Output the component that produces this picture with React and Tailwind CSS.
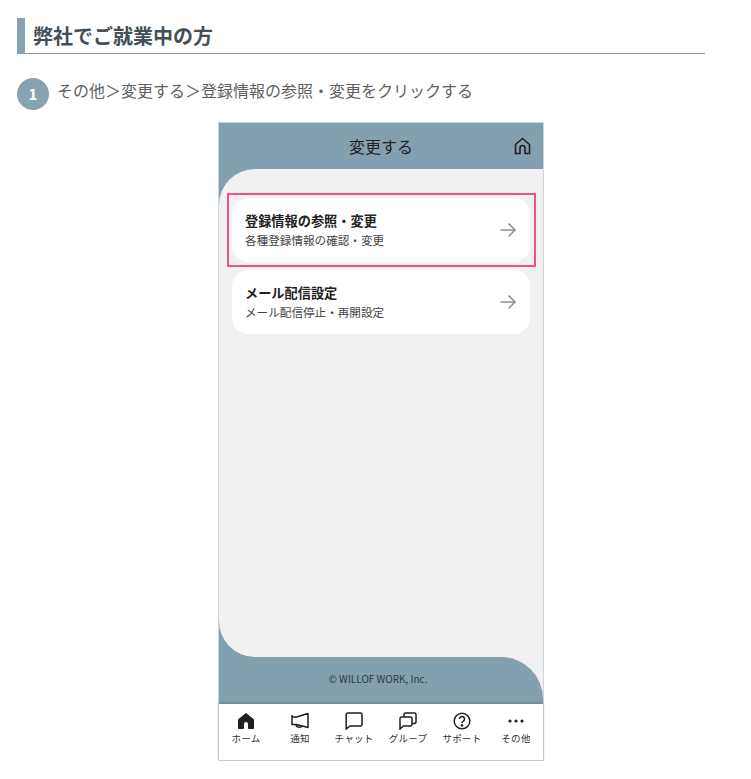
import React from "react";

const Jp = '"Noto Sans CJK JP","Noto Sans",sans-serif';

function Arrow() {
  return (
    <svg width="18" height="16" viewBox="0 0 18 16" fill="none" stroke="#8e8e8e" strokeWidth="1.5">
      <path d="M1.500 8H16M9.500 1.500 16 8l-6.500 6.500" />
    </svg>
  );
}

function Row({ title, sub }) {
  return (
    <div className="flex h-[64px] items-center justify-between rounded-[16px] bg-white pl-[13px] pr-[13px]">
      <div>
        <div className="text-[13.200px] leading-[20px] font-bold text-[#222]">{title}</div>
        <div className="text-[11.600px] leading-[18px] text-[#444]">{sub}</div>
      </div>
      <Arrow />
    </div>
  );
}

const I = {
  home: (
    <svg width="18" height="18" viewBox="0 0 18 18" fill="#1f1f1f" stroke="#1f1f1f" strokeWidth="1" strokeLinejoin="round"><path d="M9 1.500 1.500 7.500V16.500H6.500V12a2.500 2.500 0 0 1 5 0v4.500h5V7.500z" /></svg>
  ),
  mega: (
    <svg width="18" height="18" viewBox="0 0 18 18" fill="none" stroke="#1f1f1f" strokeWidth="1.500" strokeLinejoin="round"><path d="M1 3v10M1 5h4.500L17 1.500v14L5.500 12.500H1zM5 12.500c0 3 5 3.500 6 1.500" /></svg>
  ),
  chat: (
    <svg width="18" height="18" viewBox="0 0 18 18" fill="none" stroke="#1f1f1f" strokeWidth="1.500"><path d="M2.500 1h13a1.500 1.500 0 0 1 1.500 1.500v10a1.500 1.500 0 0 1-1.500 1.500H5l-3.800 3V2.500A1.500 1.500 0 0 1 2.500 1z" /></svg>
  ),
  group: (
    <svg width="18" height="18" viewBox="0 0 18 18" fill="none" stroke="#1f1f1f" strokeWidth="1.500"><path d="M2.500 5h9A1.500 1.500 0 0 1 13 6.500v6a1.500 1.500 0 0 1-1.500 1.500H4.500L1 17V6.500A1.500 1.500 0 0 1 2.500 5zM5 5V2.500A1.500 1.500 0 0 1 6.500 1h9A1.500 1.500 0 0 1 17 2.500V10a1.500 1.500 0 0 1-1.500 1.500H13" /></svg>
  ),
  help: (
    <svg width="18" height="18" viewBox="0 0 18 18" fill="none" stroke="#1f1f1f" strokeWidth="1.500"><circle cx="9" cy="9" r="7.800" /><path d="M6.500 7a2.500 2.500 0 1 1 3.800 2.100c-.8.5-1.300 1-1.300 2" /><circle cx="9" cy="13.300" r=".6" fill="#1f1f1f" /></svg>
  ),
  more: (
    <svg width="18" height="18" viewBox="0 0 18 18" fill="#1f1f1f"><circle cx="3" cy="9" r="1.600" /><circle cx="9" cy="9" r="1.600" /><circle cx="15" cy="9" r="1.600" /></svg>
  ),
};

const tabs = [
  ["ホーム", I.home],
  ["通知", I.mega],
  ["チャット", I.chat],
  ["グループ", I.group],
  ["サポート", I.help],
  ["その他", I.more],
];

export default function App() {
  return (
    <div className="h-[779px] w-[751px] overflow-hidden bg-white pt-[18px]" style={{ fontFamily: Jp }}>
      <div className="ml-[17px] mr-[46px] flex h-[36px] items-center border-b border-[#87a3b3] border-l-[8px] pl-[8px] text-[20px] font-bold text-[#444f57]">
        弊社でご就業中の方
      </div>
      <div className="ml-[17px] mt-[24px] flex h-[32px] items-start gap-[8px]">
        <div className="flex h-[32px] w-[32px] items-center justify-center rounded-full bg-[#87a3b3] text-[15px] font-bold text-white">1</div>
        <div className="pt-[1px] text-[16px] leading-[22px] text-[#5f5f5f]">その他＞変更する＞登録情報の参照・変更をクリックする</div>
      </div>

      <div className="ml-[218px] mt-[12px] flex h-[639px] w-[326px] flex-col border border-[#c9d5df] bg-[#82a0b0]">
        <div className="relative flex h-[46px] shrink-0 items-center justify-center text-[16px] text-[#222]">
          変更する
          <svg className="absolute right-[12px] top-[14px]" width="17" height="18" viewBox="0 0 17 18" fill="none" stroke="#1f1f1f" strokeWidth="1.600">
            <path d="M8.500 1.500 1.500 7.500V16.500H6V11a2.500 2.500 0 0 1 5 0v5.500h4.500V7.500z" />
          </svg>
        </div>
        <div className="relative h-[488px] shrink-0 rounded-tl-[36px] rounded-bl-[36px] bg-[#f1f1f1] px-[13px] pt-[29px]">
          <div className="flex flex-col gap-[8px]">
            <Row title="登録情報の参照・変更" sub="各種登録情報の確認・変更" />
            <Row title="メール配信設定" sub="メール配信停止・再開設定" />
          </div>
          <div className="absolute left-[8px] top-[24px] h-[74px] w-[309px] border-2 border-[#f0508c]" />
        </div>
        <div className="h-[47px] shrink-0 bg-[#f1f1f1]">
          <div className="flex h-full items-center justify-center rounded-tr-[42px] bg-[#82a0b0] pb-[5px] pr-[6px] text-[10px] text-[#2b3a42]">
            © WILLOF WORK, Inc.
          </div>
        </div>
        <div className="flex flex-1 justify-between bg-white pt-[8px] shadow-[0_-1px_3px_rgba(0,0,0,0.2)]">
          {tabs.map(([label, icon]) => (
            <div key={label} className="flex w-[54px] flex-col items-center">
              {icon}
              <span className="mt-[1px] text-[9.500px] leading-[14px] tracking-[0.3px] text-[#333]">{label}</span>
            </div>
          ))}
        </div>
      </div>
    </div>
  );
}
